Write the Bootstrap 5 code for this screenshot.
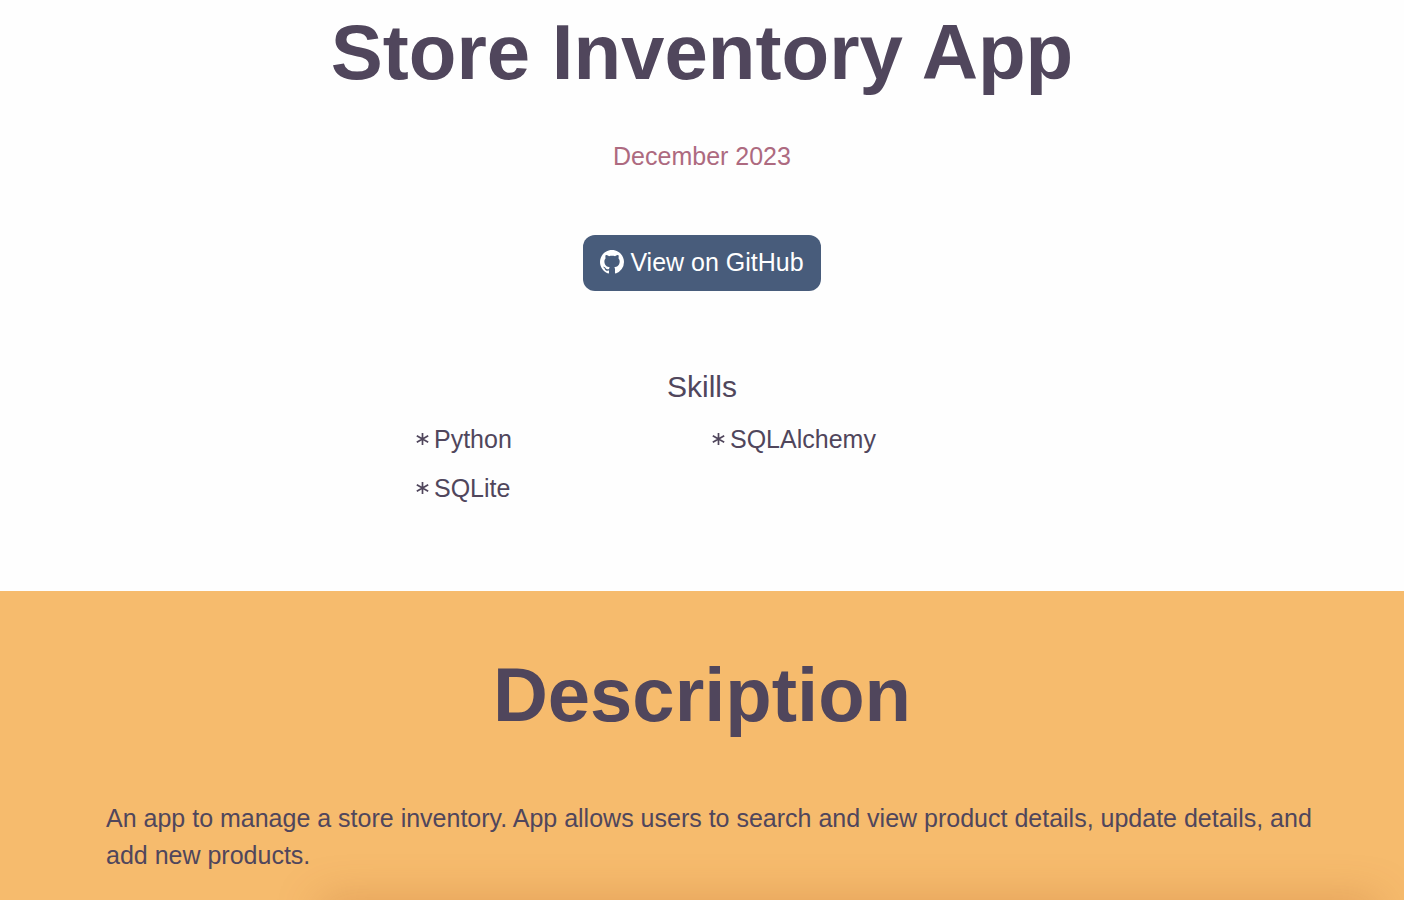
<!DOCTYPE html>
<html lang="en">
<head>
<meta charset="utf-8">
<meta name="viewport" content="width=device-width, initial-scale=1">
<title>Store Inventory App</title>
<link href="https://cdn.jsdelivr.net/npm/bootstrap@5.3.0/dist/css/bootstrap.min.css" rel="stylesheet">
<style>
  body { font-family: "Liberation Sans", Arial, sans-serif; font-size: 25px; line-height: 37px; color: #50465c; background: #fefefe; }
  h1, .section-title { font-weight: 700; line-height: 96px; }
  h1 { font-size: 78px; padding-top: 4px; margin-bottom: 38px; }
  .section-title { font-size: 76px; margin-bottom: 57px; }
  .project-date { color: #ad6a80; margin-bottom: 60px; }
  .btn-github { --bs-btn-color: #fff; --bs-btn-bg: #485c7b; --bs-btn-hover-color: #fff; --bs-btn-hover-bg: #3b4d69; --bs-btn-border-width: 0; --bs-btn-border-radius: 12px; --bs-btn-font-size: 25px; --bs-btn-line-height: 36px; --bs-btn-padding-x: 17px; gap: 6px; padding-top: 9px; padding-bottom: 11px; }
  .skills { padding-top: 78px; padding-bottom: 84px; }
  .skills h2 { font-size: 30px; line-height: 36px; font-weight: 400; margin-bottom: 16px; }
  .skill-list { max-width: 592px; row-gap: 12px; }
  .skill-list li { padding-left: 10px; display: flex; gap: 5px; }
  .skill-list svg { margin-top: 11px; }
  .description { background: #f6bb6d; padding-top: 56px; }
  .description-text { padding: 0 80px 0 106px; }
  .shot-edge { margin: 0 30px -26px 325px; height: 20px; box-shadow: 0 0 44px 4px rgba(170, 80, 30, .34); }
</style>
</head>
<body class="d-flex flex-column min-vh-100">
<header class="text-center">
  <h1>Store Inventory App</h1>
  <p class="project-date">December 2023</p>
  <a class="btn btn-github d-inline-flex align-items-center" href="#github">
    <svg width="24" height="24" viewBox="0 0 16 16" fill="currentColor" aria-hidden="true"><path d="M8 0C3.58 0 0 3.58 0 8c0 3.54 2.29 6.53 5.47 7.59.4.07.55-.17.55-.38 0-.19-.01-.82-.01-1.49-2.01.37-2.53-.49-2.69-.94-.09-.23-.48-.94-.82-1.13-.28-.15-.68-.52-.01-.53.63-.01 1.08.58 1.23.82.72 1.21 1.87.87 2.33.66.07-.52.28-.87.51-1.07-1.78-.2-3.64-.89-3.64-3.95 0-.87.31-1.59.82-2.15-.08-.2-.36-1.02.08-2.12 0 0 .67-.21 2.2.82.64-.18 1.32-.27 2-.27s1.36.09 2 .27c1.53-1.04 2.2-.82 2.2-.82.44 1.1.16 1.92.08 2.12.51.56.82 1.27.82 2.15 0 3.07-1.87 3.75-3.65 3.95.29.25.54.73.54 1.48 0 1.07-.01 1.93-.01 2.2 0 .21.15.46.55.38A8.01 8.01 0 0 0 16 8c0-4.42-3.58-8-8-8"/></svg>
    <span>View on GitHub</span>
  </a>
</header>
<section class="skills">
  <h2 class="text-center">Skills</h2>
  <ul class="skill-list row row-cols-2 gx-0 list-unstyled mx-auto mb-0">
    <li><svg width="13" height="14" viewBox="0 0 13 14" stroke="currentColor" stroke-width="1.7" aria-hidden="true"><path d="M6.5 1v12M.8 3.7l11.4 6.6M.8 10.3l11.4-6.6"/></svg>Python</li>
    <li><svg width="13" height="14" viewBox="0 0 13 14" stroke="currentColor" stroke-width="1.7" aria-hidden="true"><path d="M6.5 1v12M.8 3.7l11.4 6.6M.8 10.3l11.4-6.6"/></svg>SQLAlchemy</li>
    <li><svg width="13" height="14" viewBox="0 0 13 14" stroke="currentColor" stroke-width="1.7" aria-hidden="true"><path d="M6.5 1v12M.8 3.7l11.4 6.6M.8 10.3l11.4-6.6"/></svg>SQLite</li>
  </ul>
</section>
<section class="description flex-grow-1 d-flex flex-column overflow-hidden">
  <h2 class="section-title text-center">Description</h2>
  <p class="description-text mb-0">An app to manage a store inventory. App allows users to search and view product details, update details, and add new products.</p>
  <div class="shot-edge mt-auto"></div>
</section>
<script src="https://cdn.jsdelivr.net/npm/bootstrap@5.3.0/dist/js/bootstrap.bundle.min.js"></script>
</body>
</html>
